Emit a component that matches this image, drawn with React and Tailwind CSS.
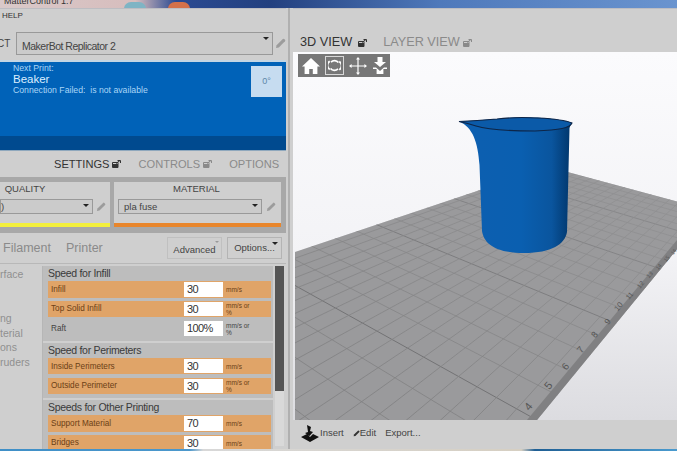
import React from 'react';

const font = { fontFamily: '"Liberation Sans", Arial, sans-serif' };

const PopIcon = ({ className = 'text-[#333]' }) => (
  <svg width="9" height="8" viewBox="0 0 9 8" className={className}>
    <path d="M0.5 2.5h5.5v5h-5.5z" fill="none" stroke="currentColor" strokeWidth="1" />
    <path d="M1 4h5v3h-5z" fill="currentColor" />
    <path d="M4 3.5l4-3M5.5 0.5h3v2.5" fill="none" stroke="currentColor" strokeWidth="1" />
  </svg>
);

const PencilIcon = ({ className = 'text-[#9c9c9c]', size = 11 }) => (
  <svg width={size} height={size} viewBox="0 0 11 11" className={className}>
    <path d="M1 10l.6-2.8L7.8 1a1 1 0 0 1 1.4 0l.8.8a1 1 0 0 1 0 1.4L3.8 9.4z" fill="currentColor" />
  </svg>
);

const Caret = () => <span className="absolute right-[3px] top-[4px] w-0 h-0 border-x-[3px] border-x-transparent border-t-[3px] border-t-[#222]" />;

const groups = [
  {
    title: 'Speed for Infill',
    rows: [
      { label: 'Infill', value: '30', unit: 'mm/s', on: true },
      { label: 'Top Solid Infill', value: '30', unit: 'mm/s or %', on: true },
      { label: 'Raft', value: '100%', unit: 'mm/s or %', on: false },
    ],
  },
  {
    title: 'Speed for Perimeters',
    rows: [
      { label: 'Inside Perimeters', value: '30', unit: 'mm/s', on: true },
      { label: 'Outside Perimeter', value: '30', unit: 'mm/s or %', on: true },
    ],
  },
  {
    title: 'Speeds for Other Printing',
    rows: [
      { label: 'Support Material', value: '70', unit: 'mm/s', on: true },
      { label: 'Bridges', value: '30', unit: 'mm/s', on: true },
    ],
  },
];

// left list is cut off by the window edge in the picture
const sideItems = ['rface', '', '', 'ng', 'terial', 'ons', 'ruders'];

const SettingRow = ({ label, value, unit, on }) => (
  <div className={`flex items-center h-[16.5px] pl-[3px] ${on ? 'bg-[#e0a468] text-[#6b4016]' : 'text-[#444]'}`}>
    <span className="w-[133px] pt-[1px] text-[8.2px] leading-none">{label}</span>
    <span className="w-[39px] h-[14.5px] bg-white text-[#333] text-[11px] tracking-[-0.6px] leading-[14.5px] pl-[3px]">{value}</span>
    <span className="w-[26px] ml-[3px] text-[6.5px] leading-[7px]">{unit}</span>
  </div>
);

const SettingGroup = ({ title, rows }) => (
  <div className="bg-[#bdbdbd] pl-[5px] pr-[2px] pb-[4px] mb-[2px]">
    <div className="h-[15px] pt-[1px] text-[10.5px] tracking-[-0.3px] leading-[13px] text-[#3a3a3a]">{title}</div>
    <div className="flex flex-col gap-[3.2px]">
      {rows.map((r) => <SettingRow key={r.label} {...r} />)}
    </div>
  </div>
);

// bed grid: projective map, with the two vanishing points read off the picture
const R = [709, 210];
const Vb = [819, 74.5];
const Va = [-360, -79];
const project = (u, v) => {
  const w = 1 + u + v;
  return [(R[0] + u * Vb[0] + v * Va[0]) / w, (R[1] + u * Vb[1] + v * Va[1]) / w];
};
const uFor = (n) => -0.6086 + (n - 4) * 0.0305;
const vStep = 0.0095;

const BedGrid = () => {
  const lines = [];
  for (let n = -2; n < 24; n++) {
    const a = project(uFor(n), 0);
    const b = project(uFor(n), 0.5);
    lines.push(<line key={`a${n}`} x1={a[0]} y1={a[1]} x2={b[0]} y2={b[1]} stroke={n % 5 === 4 ? '#6e6e70' : '#808082'} strokeWidth={n % 5 === 4 ? 1 : 0.8} />);
  }
  for (let i = 0; i < 54; i++) {
    const a = project(-0.72, i * vStep);
    const b = project(0, i * vStep);
    lines.push(<line key={`b${i}`} x1={a[0]} y1={a[1]} x2={b[0]} y2={b[1]} stroke="#808082" strokeWidth="0.8" />);
  }
  const labels = [
    ['4', 529, 407, 11], ['5', 549, 386, 11], ['6', 566, 367, 10], ['7', 581, 350, 9.5], ['8', 595, 335, 9],
    ['9', 608, 322, 8.5], ['10', 619, 307, 8], ['11', 630, 296, 7], ['12', 641, 285, 6.5], ['13', 650, 275, 6],
    ['14', 659, 267, 5.5], ['15', 667, 259, 5.5], ['16', 674, 252, 5],
  ];
  return (
    <svg viewBox="293 52 384 368" className="w-[384px] h-[368px] block">
      <defs>
        <clipPath id="bed"><polygon points="295,252 549,167 709,210 537,420 295,420" /></clipPath>
        <linearGradient id="glass" x1="0" x2="1" y1="0" y2="0">
          <stop offset="0" stopColor="#0d5fb0" />
          <stop offset="0.55" stopColor="#0a5fb0" />
          <stop offset="0.82" stopColor="#0a559e" />
          <stop offset="1" stopColor="#003468" />
        </linearGradient>
        <linearGradient id="far" gradientUnits="userSpaceOnUse" x1="430" y1="420" x2="560" y2="170">
          <stop offset="0" stopColor="#9a9a9c" stopOpacity="0" />
          <stop offset="1" stopColor="#9a9a9c" stopOpacity="0.6" />
        </linearGradient>
      </defs>
      <polygon points="295,252 549,167 709,210 537,420 295,420" fill="#9a9a9c" />
      <g clipPath="url(#bed)">{lines}</g>
      <polygon points="295,252 549,167 709,210 537,420 295,420" fill="url(#far)" />
      <polygon points="527,420 537,420 709,210 702,210" fill="#808082" />
      {labels.map(([t, x, y, s]) => (
        <text key={t} x={x} y={y} fontSize={s} fill="#555" textAnchor="middle" dominantBaseline="middle" transform={`rotate(-50 ${x} ${y})`} style={font}>{t}</text>
      ))}
      <path d="M459 121.5C473 127 478 143 479.5 165L482 231C484 244 496 253 524 253C552 253 565 244 567 232L569.5 128C571 124 572 123 572 123C560 118 520 116 497 119C485 120 470 121 459 121.5Z" fill="url(#glass)" />
      <path d="M459 121.5C470 121 485 120 497 119C520 116 560 118 572 123C570 128 560 130 535 131C512 131 488 130 476 126C470 124 464 122.5 459 121.5Z" fill="#0b5aa8" stroke="#0e2547" strokeWidth="1.1" />
    </svg>
  );
};

const Toolbar = () => (
  <div className="absolute left-[5px] top-[2px] w-[92px] h-[23px] bg-[#777777] flex items-center pl-[3px] text-white">
    <svg width="20" height="18" viewBox="0 0 20 18"><path d="M10 1L1 9.5h2.6V17h4.6v-5h3.6v5h4.6V9.5H19z" fill="currentColor" /></svg>
    <div className="ml-[4px] w-[19px] h-[19px] border border-[#d8d8d8] flex items-center justify-center">
      <svg width="13" height="13" viewBox="0 0 15 15" fill="none" stroke="currentColor" strokeWidth="2"><path d="M3.5 3.5A5.6 5.6 0 0 1 12 4M11.5 11.5A5.6 5.6 0 0 1 3 11M13 12.5A5.6 5.6 0 0 0 13 3M2 2.5A5.6 5.6 0 0 0 2 12" /></svg>
    </div>
    <svg className="ml-[4px]" width="20" height="20" viewBox="0 0 20 20" fill="currentColor"><path d="M9.4 3h1.2v6.4H17v1.2h-6.4V17H9.4v-6.4H3V9.4h6.4z" /><path d="M10 1l2 2.6H8zM10 19l-2-2.6h4zM1 10l2.6-2v4zM19 10l-2.6 2V8z" /></svg>
    <svg className="ml-[4px]" width="16" height="20" viewBox="0 0 16 20" fill="currentColor"><path d="M5.5 1h5v5H14l-6 5-6-5h3.5zM1 11.5h3L8 15l4-3.5h3V13h-3.6v5H4.6v-5H1z" /></svg>
  </div>
);

const App = () => (
  <div style={font} className="w-[677px] h-[451px] overflow-hidden flex flex-col bg-[#cfcfcf]">
    {/* desktop behind the window */}
    <div className="relative h-[8px] shrink-0 overflow-hidden bg-[linear-gradient(90deg,#d9c9c9_0%,#d7bdbd_20%,#2b4a92_26%,#23407f_40%,#4f79bb_65%,#6a94cf_100%)]">
      <div className="-mt-[4px] pl-[4px] text-[9px] leading-[10px] text-[#333]">MatterControl 1.7</div>
      <span className="absolute left-[124px] top-[2px] w-[22px] h-[14px] rounded-full bg-[#7fb4c4]" />
      <span className="absolute left-[168px] top-[2px] w-[22px] h-[14px] rounded-full bg-[#d4714a]" />
    </div>

    <div className="flex-1 min-h-0 flex">
      {/* left column */}
      <div className="w-[286px] shrink-0 flex flex-col">
        <div className="h-[16px] shrink-0 pl-[2px] text-[8px] leading-[14px] text-[#333] border-t border-[#bdbdc2]">HELP</div>
        <div className="h-[36px] shrink-0 flex items-center pt-[3px]">
          <span className="-ml-[3px] w-[19px] text-[10px] text-[#444]">CT</span>
          <div className="relative w-[257px] h-[23px] border border-[#999] bg-[#cbcbcb] pl-[5px] text-[10.5px] tracking-[-0.5px] leading-[26px] text-[#444]">
            MakerBot Replicator 2
            <Caret />
          </div>
          <span className="ml-[2px]"><PencilIcon /></span>
        </div>
        <div className="h-[90px] shrink-0 flex flex-col border-t-2 border-[#c3d5e3]">
          <div className="flex-1 bg-[#0062b8] flex justify-between pt-[1px] pl-[13px] pr-[4px]">
            <div className="text-[#a9d6f7] text-[8.7px] leading-[11px]">
              <div>Next Print:</div>
              <div className="text-[11.5px] leading-[11px] text-[#dcefff]">Beaker</div>
              <div className="whitespace-pre">Connection Failed:  is not available</div>
            </div>
            <div className="mt-[3px] w-[31px] h-[31px] bg-[#c6dcf0] text-[#5d87a8] text-[9px] flex items-center justify-center">0°</div>
          </div>
          <div className="h-[14px] bg-[#004a8f]" />
        </div>
        <div className="h-[27px] shrink-0 flex items-center pl-[54px] text-[11.1px] border-t border-[#8fa8bd]">
          <span className="text-[#333]">SETTINGS</span>
          <span className="ml-[3px]"><PopIcon /></span>
          <span className="ml-[17px] text-[#8a8a8a]">CONTROLS</span>
          <span className="ml-[3px]"><PopIcon className="text-[#8a8a8a]" /></span>
          <span className="ml-[17px] text-[#8a8a8a]">OPTIONS</span>
        </div>

        {/* quality / material */}
        <div className="h-[56px] shrink-0 bg-[#a8a8a8] flex gap-[4px] pt-[5px] pr-[5px]">
          <div className="w-[110px] h-[45px] bg-[#cfcfcf] flex flex-col border-b-4 border-[#f3ef3c]">
            <div className="h-[17px] pr-[60px] text-center text-[9.5px] leading-[14px] text-[#444]">QUALITY</div>
            <div className="flex items-center">
              <div className="relative w-[93px] h-[15px] border border-[#999] bg-[#cbcbcb] text-[9.5px] leading-[14px] text-[#444]">
                )
                <Caret />
              </div>
              <span className="ml-[3px]"><PencilIcon size={10} /></span>
            </div>
          </div>
          <div className="flex-1 h-[45px] bg-[#cfcfcf] flex flex-col border-b-4 border-[#e8862c]">
            <div className="h-[17px] text-center pr-[2px] text-[9.5px] leading-[14px] text-[#444]">MATERIAL</div>
            <div className="flex items-center pl-[4px]">
              <div className="relative w-[144px] h-[15px] border border-[#999] bg-[#cbcbcb] pl-[5px] text-[9.5px] leading-[14px] text-[#444]">
                pla fuse
                <Caret />
              </div>
              <span className="ml-[4px]"><PencilIcon size={10} /></span>
            </div>
          </div>
        </div>

        <div className="h-[31px] shrink-0 flex items-center pl-[3px] pr-[4px] border-b border-[#b8b8b8]">
          <span className="text-[12.5px] text-[#8a8a8a]">Filament</span>
          <span className="ml-[15px] text-[12.5px] text-[#8a8a8a]">Printer</span>
          <div className="relative ml-auto w-[55px] h-[22px] border border-[#c0c0c0] text-center text-[9.5px] leading-[24px] text-[#444]">
            Advanced
            <span className="absolute right-[2px] top-[3px] w-0 h-0 border-x-[2px] border-x-transparent border-t-[2px] border-t-[#999]" />
          </div>
          <div className="relative ml-[5px] w-[55px] h-[22px] border border-[#b4b4b4] text-center text-[9.5px] leading-[20px] text-[#444]">
            Options...
            <Caret />
          </div>
        </div>

        {/* settings list */}
        <div className="flex-1 min-h-0 flex overflow-hidden pt-[2px]">
          <div className="w-[42px] shrink-0 pt-[1px] text-[10.5px] leading-[14.7px] text-[#8f8f8f]">
            {sideItems.map((t, i) => <div key={i} className="h-[14.7px]">{t}</div>)}
          </div>
          <div className="w-[231px] shrink-0 border-l border-[#b6b6b6]">
            {groups.map((g) => <SettingGroup key={g.title} {...g} />)}
          </div>
          <div className="ml-[2px] w-[9px] h-[180px] bg-[#d9d9d9]">
            <div className="h-[125px] bg-[#555555]" />
          </div>
        </div>
      </div>

      {/* divider */}
      <div className="w-[7px] shrink-0 flex">
        <div className="w-[2px] ml-[2px] bg-[#b0b0b0]" />
      </div>

      {/* 3D view */}
      <div className="flex-1 min-w-0 flex flex-col">
        <div className="h-[44px] shrink-0 flex items-center pl-[7px] pt-[24px] text-[12.7px] border-t border-[#bdbdc2]">
          <span className="text-[#333]">3D VIEW</span>
          <span className="ml-[6px]"><PopIcon /></span>
          <span className="ml-[16px] text-[#8a8a8a]">LAYER VIEW</span>
          <span className="ml-[3px]"><PopIcon className="text-[#8a8a8a]" /></span>
        </div>
        <div className="relative h-[368px] shrink-0 bg-[linear-gradient(180deg,#fbfbfd_0%,#f3f3f6_55%,#dcdce0_100%)]">
          <BedGrid />
          <Toolbar />
        </div>
        <div className="flex-1 flex items-center pl-[7px] pb-[2px] text-[9.5px] text-[#444]">
          <svg width="20" height="20" viewBox="0 0 20 20" className="text-[#111]"><path d="M7 1l4 2-1 4 3 1-3.5 4L5 9l3-1zM1 13l6-3 3 3 3-3 6 3-9 5z" fill="currentColor" /></svg>
          <span>Insert</span>
          <span className="ml-[9px]"><PencilIcon size={7} className="text-[#333]" /></span>
          <span>Edit</span>
          <span className="ml-[9px]">Export...</span>
        </div>
      </div>
    </div>

    <div className="h-[2px] shrink-0 bg-[linear-gradient(90deg,#3f8fc7_0%,#4c98cc_28%,#d8d8d8_30%,#d6cfc2_77%,#1f5f94_79%,#4a9bcf_100%)]" />
  </div>
);

export default App;
